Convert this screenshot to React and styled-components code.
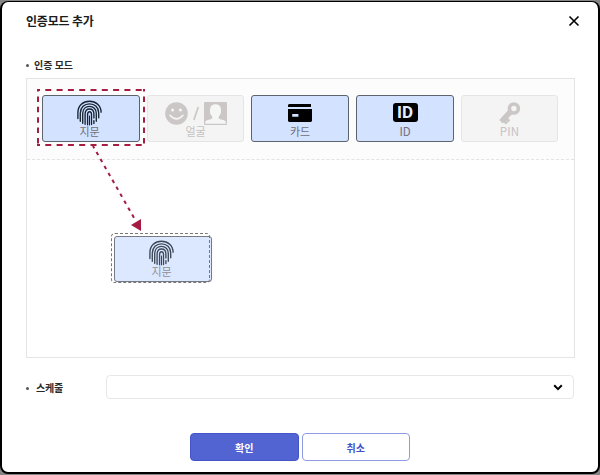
import React from "react";
import styled, { createGlobalStyle, css } from "styled-components";

const GlobalStyle = createGlobalStyle`
  *, *::before, *::after { box-sizing: border-box; }
  html, body, #root { height: 100%; }
  body {
    margin: 0;
    overflow: hidden;
    background: #858585;
    font-family: "Noto Sans CJK KR", "Noto Sans", sans-serif;
    color: #1c1c1c;
  }
  #root { display: flex; align-items: center; }
  button { font-family: inherit; padding: 0; }
`;

const Dialog = styled.main`
  display: flex;
  flex-direction: column;
  width: 600px;
  height: 473px;
  padding: 0 24px;
  background: #fff;
  border: 2px solid #000;
  border-top-width: 1px;
  border-radius: 8px;
`;

const Header = styled.header`
  display: flex;
  align-items: center;
  justify-content: space-between;
  flex: none;
  height: 37px;
  margin-right: -6px;
`;

const Title = styled.h1`
  margin: 0;
  font-size: 12px;
  line-height: 18px;
  font-weight: 700;
  letter-spacing: -0.2px;
`;

const CloseButton = styled.button`
  display: flex;
  border: 0;
  background: none;
`;

const FieldLabel = styled.div`
  display: flex;
  align-items: center;
  gap: ${(p) => p.$gap}px;
  width: 80px;
  flex: none;
  font-size: 10px;
  line-height: 14px;
  font-weight: 700;
  color: #2a2a2a;

  &::before {
    content: "";
    width: 3px;
    height: 3px;
    border-radius: 2px;
    background: #555;
  }
`;

const ModeLabel = styled(FieldLabel)`
  height: 14px;
  margin: 19px 0 6px;
`;

const ScheduleLabel = styled(FieldLabel)`
  padding-top: 2px;
  letter-spacing: -0.2px;
`;

const Panel = styled.section`
  width: 549px;
  height: 280px;
  flex: none;
  border: 1px solid #e4e4e4;
`;

const Palette = styled.div`
  display: flex;
  gap: 7px;
  height: 81px;
  padding: 16px 0 0 15px;
  background: #fcfcfc;
  border-bottom: 1px dashed #e3e3e3;
`;

const DropArea = styled.div`
  padding: 73px 0 0 84px;
`;

const DropTarget = styled.div`
  position: relative;
  width: 99px;
  height: 50px;

  &::after {
    content: "";
    position: absolute;
    inset: 0;
    border: 1px dashed #777;
    border-radius: 4px;
  }
`;

const Card = styled.div`
  position: relative;
  display: flex;
  flex-direction: column;
  align-items: center;
  width: 98px;
  height: 47px;
  flex: none;
  padding: 5px ${(p) => (p.$print ? 3 : 0)}px 0 0;
  border: 1px solid #5d636d;
  border-radius: 3px;
  background: #d3e2ff;
  color: #716e77;

  ${(p) => p.$disabled && css`
    width: 97px;
    border-color: #e5e5e5;
    background: #f4f4f4;
    color: #c6c2c1;
  `}
`;

const DraggedCard = styled(Card)`
  position: absolute;
  left: 3px;
  top: 3px;
  height: 46px;
  padding-top: 4px;
  background: #dce8ff;
  border-color: #757a83;
  color: #918f95;
`;

const IconRow = styled.div`
  display: flex;
  align-items: center;
  gap: 5px;
  height: 24px;
`;

const CardText = styled.span`
  font-size: ${(p) => p.$size || 11}px;
  line-height: 13px;
  letter-spacing: ${(p) => p.$spacing || "-0.2px"};
`;

const Highlight = styled.div`
  position: absolute;
  left: -7px;
  top: -8px;
  width: 109px;
  height: 144px;
  pointer-events: none;
  z-index: 1;

  svg { display: block; }
`;

const ScheduleRow = styled.div`
  display: flex;
  align-items: center;
  flex: none;
  height: 24px;
  margin-top: 17px;
`;

const Select = styled.div`
  display: flex;
  align-items: center;
  justify-content: flex-end;
  flex: none;
  width: 468px;
  height: 24px;
  padding-right: 10px;
  border: 1px solid #e8e8e8;
  border-radius: 4px;
`;

const Footer = styled.footer`
  display: flex;
  justify-content: center;
  gap: 3px;
  margin-top: 34px;
`;

const Button = styled.button`
  flex: none;
  width: 108.5px;
  height: 28px;
  padding-top: 1px;
  border: 1px solid ${(p) => (p.$primary ? "#4654ca" : "#8e9ae2")};
  border-radius: 4px;
  background: ${(p) => (p.$primary ? "#5264d1" : "#fff")};
  color: ${(p) => (p.$primary ? "#fff" : "#4250c9")};
  font-size: 10px;
  line-height: 14px;
  font-weight: 700;
`;

const Fingerprint = ({ color = "#172334" }) => (
  <svg width="25" height="26" viewBox="0 0 25 26" fill="none" stroke={color} strokeWidth="1.35" strokeLinecap="round">
    <path d="M.9 18.5V12.5C1 5.8 6 1.2 12.5 1.2S24 5.8 24.1 12.2" />
    <path d="M3.3 21.2V13C3.5 7.5 7.3 3.8 12.5 3.8s9.2 3.7 9.2 9.2v4.8" />
    <path d="M5.7 23.2v-9.8c.2-4.2 3-7 6.8-7s6.8 2.8 6.8 7v7.8" />
    <path d="M8.1 24.3V14c.1-3 1.9-5 4.4-5s4.4 2 4.4 5v4M16.9 20.6v3" />
    <path d="M10.6 24.8V14.6c0-3.8 3.9-3.8 3.9 0v10" />
    <path d="M12.5 16v9" strokeWidth="1" />
  </svg>
);

const Smile = () => (
  <svg width="23" height="23" viewBox="0 0 23 23">
    <circle cx="11.5" cy="11.5" r="11.3" fill="#cbc7c6" />
    <circle cx="7.6" cy="8" r="1.6" fill="#f4f4f4" />
    <circle cx="15.4" cy="8" r="1.6" fill="#f4f4f4" />
    <path d="M5 13.3Q11.5 20.5 18 13.3" fill="none" stroke="#f4f4f4" strokeWidth="1.7" strokeLinecap="round" />
  </svg>
);

const Slash = () => (
  <svg width="6" height="15" viewBox="0 0 6 15">
    <path d="M5.3 1 .8 14" stroke="#cbc7c6" strokeWidth="1.7" />
  </svg>
);

const Portrait = () => (
  <svg width="23" height="23" viewBox="0 0 23 23">
    <rect width="23" height="23" rx="1" fill="#cbc7c6" />
    <path d="M1.2 21.8v-2.4c2.3-1.7 5.2-1.5 7-2.8v-2.2c-2-1.7-2.5-4.2-2.2-7C6.2 4 8.4 2.3 11.5 2.3s5.3 1.8 5.5 5c.3 2.9-.3 5.5-2.2 7.1v2.2c1.8 1.3 4.7 1.1 7 2.8v2.4z" fill="#f6f6f6" />
  </svg>
);

const CreditCard = () => (
  <svg width="24" height="19" viewBox="0 0 24 19">
    <path d="M1 0h22v3H0V1zM0 5h24v12l-1 1H1l-1-1zM4.2 10v2.8h6.2V10z" fill="#000" fillRule="evenodd" />
  </svg>
);

const IdBadge = styled.span`
  display: flex;
  align-items: center;
  justify-content: center;
  width: 25px;
  height: 19px;
  margin-bottom: 2px;
  border-radius: 3px;
  background: #000;
  color: #e4edff;
  font: 700 17px/19px Roboto, sans-serif;
`;

const KeyIcon = () => (
  <svg width="22" height="24" viewBox="0 0 22 24">
    <circle cx="14.9" cy="7.5" r="4.5" fill="none" stroke="#cbc7c6" strokeWidth="3.6" />
    <path d="M9 9.2 13 13.2 6.9 19.3l2.1 2.1-2.1 2.1-2.1-2.1-1.1 1.1-3.4-3.5z" fill="#cbc7c6" />
    <path d="m8.5 16.5 2.8 2.8-2.1 2.1-2.8-2.8z" fill="#cbc7c6" />
  </svg>
);

export default function App() {
  return (
    <>
      <GlobalStyle />
      <Dialog>
        <Header>
          <Title>인증모드 추가</Title>
          <CloseButton aria-label="닫기">
            <svg width="12" height="12" viewBox="0 0 12 12" fill="none" stroke="#000" strokeWidth="1.6">
              <path d="m1.5 1.5 9 9M10.5 1.5l-9 9" />
            </svg>
          </CloseButton>
        </Header>
        <ModeLabel $gap={5}>인증 모드</ModeLabel>
        <Panel>
          <Palette>
            <Card $print>
              <IconRow><Fingerprint /></IconRow>
              <CardText>지문</CardText>
              <Highlight>
                <svg width="109" height="144" viewBox="0 0 109 144" fill="none" stroke="#a51c42" strokeWidth="2">
                  <path d="M1 2H109M1 57H109" strokeDasharray="6 5.3" strokeDashoffset="3" />
                  <path d="M2 1V58M108 1V58" strokeDasharray="5.5 4.9" strokeDashoffset="3" />
                  <path d="M57 58 99 131.5" strokeDasharray="3.5 4.5" strokeDashoffset="1" />
                  <path d="M95 137 105 131 105 143z" fill="#a51c42" stroke="none" />
                </svg>
              </Highlight>
            </Card>
            <Card $disabled>
              <IconRow><Smile /><Slash /><Portrait /></IconRow>
              <CardText>얼굴</CardText>
            </Card>
            <Card>
              <IconRow><CreditCard /></IconRow>
              <CardText>카드</CardText>
            </Card>
            <Card>
              <IconRow><IdBadge>ID</IdBadge></IconRow>
              <CardText $size={11.5}>ID</CardText>
            </Card>
            <Card $disabled>
              <IconRow><KeyIcon /></IconRow>
              <CardText $spacing="0.1px" $size={11.5}>PIN</CardText>
            </Card>
          </Palette>
          <DropArea>
            <DropTarget>
              <DraggedCard $print>
                <IconRow><Fingerprint color="#3e4858" /></IconRow>
                <CardText>지문</CardText>
              </DraggedCard>
            </DropTarget>
          </DropArea>
        </Panel>
        <ScheduleRow>
          <ScheduleLabel $gap={7}>스케줄</ScheduleLabel>
          <Select>
            <svg width="10" height="7" viewBox="0 0 10 7" fill="none" stroke="#000" strokeWidth="2">
              <path d="m1.2 1.3 3.8 3.8 3.8-3.8" />
            </svg>
          </Select>
        </ScheduleRow>
        <Footer>
          <Button $primary>확인</Button>
          <Button>취소</Button>
        </Footer>
      </Dialog>
    </>
  );
}
